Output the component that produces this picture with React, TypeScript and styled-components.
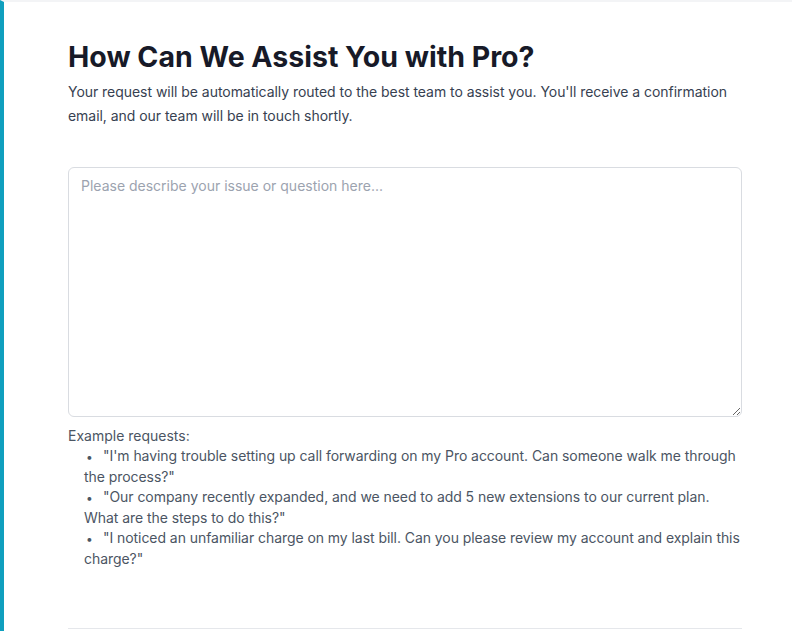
import React from 'react'
import styled, { createGlobalStyle } from 'styled-components'

const GlobalStyle = createGlobalStyle`
    html, body {
        margin: 0;
        padding: 0;
        background: #ffffff;
    }

    body {
        font-family: Inter, "Noto Sans", sans-serif;
        -webkit-font-smoothing: antialiased;
    }

    *, *::before, *::after {
        box-sizing: border-box;
    }
`

const examples = [
    '"I\'m having trouble setting up call forwarding on my Pro account. Can someone walk me through the process?"',
    '"Our company recently expanded, and we need to add 5 new extensions to our current plan. What are the steps to do this?"',
    '"I noticed an unfamiliar charge on my last bill. Can you please review my account and explain this charge?"'
]

const App = () => {
    return (
        <>
            <GlobalStyle />
            <Page>
                <Content>
                    <Title>How Can We Assist You with Pro?</Title>
                    <Intro>
                        Your request will be automatically routed to the best team to assist you. You'll receive a confirmation
                        email, and our team will be in touch shortly.
                    </Intro>
                    <RequestField placeholder='Please describe your issue or question here...' />
                    <ExamplesLabel>Example requests:</ExamplesLabel>
                    <ExampleList>
                        {examples.map((text, index) => (
                            <ExampleItem key={index}>{text}</ExampleItem>
                        ))}
                    </ExampleList>
                    <Divider />
                </Content>
            </Page>
        </>
    )
}

const Page = styled.div`
    height: 631px;
    overflow: hidden;
    border-left: 4px solid #0f9fbe;
    border-top: 2px solid #f3f4f6;
`

const Content = styled.div`
    padding: 0 50px 0 64px;
    display: flex;
    flex-direction: column;
`

const Title = styled.h1`
    margin: 38px 0 0;
    font-size: 28.5px;
    line-height: 34px;
    font-weight: 700;
    color: #171a28;
`

const Intro = styled.p`
    margin: 6px 0 0;
    font-size: 14px;
    line-height: 24px;
    letter-spacing: -0.04px;
    color: #374151;
`

const RequestField = styled.textarea`
    margin-top: 39px;
    width: 100%;
    height: 250px;
    padding: 8px 12px;
    border: 1px solid #d9dce1;
    border-radius: 6px;
    font-family: Inter, "Noto Sans", sans-serif;
    font-size: 14px;
    line-height: 20px;
    color: #111827;
    resize: vertical;
    outline: none;

    &::placeholder {
        color: #9ca3af;
    }
`

const ExamplesLabel = styled.div`
    margin-top: 9px;
    font-size: 14px;
    line-height: 20px;
    color: #4b5563;
`

const ExampleList = styled.ul`
    margin: 0;
    padding-left: 16px;
    list-style: none;
    font-size: 14px;
    line-height: 20px;
    letter-spacing: -0.06px;
    color: #4b5563;
`

const ExampleItem = styled.li`
    &::before {
        content: '•';
        display: inline-block;
        width: 19px;
        padding-left: 2px;
        font-size: 12px;
    }
`

const Divider = styled.div`
    margin-top: 59px;
    height: 1px;
    background: #e5e7eb;
`

export default App
